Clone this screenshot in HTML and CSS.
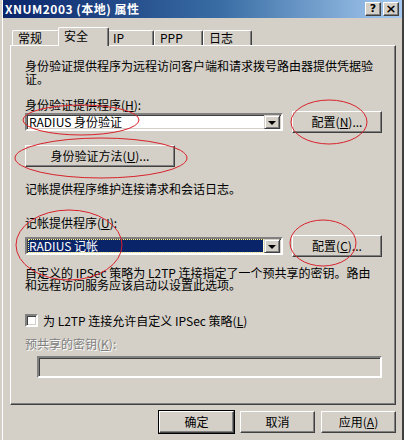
FILE: index.html
```html
<!DOCTYPE html>
<html lang="zh-CN">
<head>
<meta charset="UTF-8">
<title>XNUM2003 (本地) 属性</title>
<link rel="stylesheet" href="styles.css">
</head>
<body>

<div class="window">
    <div class="titlebar">
        <span class="title">XNUM2003 (本地) 属性</span>
        <div class="caption-btns">
            <span class="cbtn">?</span>
            <span class="cbtn close">×</span>
        </div>
    </div>

    <div class="client">
        <div class="tabs">
            <div class="tab w47">常规</div>
            <div class="tab active">安全</div>
            <div class="tab w46">IP</div>
            <div class="tab w48">PPP</div>
            <div class="tab w48">日志</div>
        </div>

        <div class="panel">
            <div class="intro">
                <div class="line">身份验证提供程序为远程访问客户端和请求拨号路由器提供凭据验</div>
                <div class="line">证。</div>
            </div>

            <div class="label first">身份验证提供程序(<u>H</u>):</div>
            <div class="row">
                <div class="combo">
                    <div class="combo-text">RADIUS 身份验证</div>
                    <div class="combo-arrow"><span class="tri"></span></div>
                </div>
                <button class="btn cfg">配置(<u>N</u>)...</button>
            </div>

            <button class="btn method">身份验证方法(<u>U</u>)...</button>

            <div class="label note">记帐提供程序维护连接请求和会话日志。</div>

            <div class="label second">记帐提供程序(<u>U</u>):</div>
            <div class="row tight">
                <div class="combo">
                    <div class="combo-text selected"><span class="focus">RADIUS 记帐</span></div>
                    <div class="combo-arrow"><span class="tri"></span></div>
                </div>
                <button class="btn cfg">配置(<u>C</u>)...</button>
            </div>

            <div class="para">
                <div class="line">自定义的 IPSec 策略为 L2TP 连接指定了一个预共享的密钥。路由</div>
                <div class="line">和远程访问服务应该启动以设置此选项。</div>
            </div>

            <label class="check">
                <span class="box"></span>
                <span class="check-text">为 L2TP 连接允许自定义 IPSec 策略(<u>L</u>)</span>
            </label>

            <div class="label disabled">预共享的密钥(<u>K</u>):</div>
            <div class="textbox"></div>
        </div>

        <div class="actions">
            <button class="btn act default">确定</button>
            <button class="btn act">取消</button>
            <button class="btn act">应用(<u>A</u>)</button>
        </div>
    </div>
</div>

<!-- red pen marks drawn over the screenshot -->
<svg class="marks" width="404" height="440" viewBox="0 0 404 440">
    <ellipse cx="81" cy="120" rx="58" ry="15"/>
    <ellipse cx="329" cy="122" rx="38" ry="22"/>
    <ellipse cx="101" cy="158" rx="86" ry="20"/>
    <ellipse cx="69" cy="245" rx="53" ry="35"/>
    <ellipse cx="323" cy="243" rx="33" ry="23"/>
</svg>

</body>
</html>
```

FILE: styles.css
```css
body {
    margin: 0;
    padding: 0;
    background-color: #d4d0c8;
    font-family: "Noto Sans CJK SC", "DejaVu Sans", sans-serif;
    font-size: 12px;
    color: #000;
    width: 404px;
    height: 440px;
    overflow: hidden;
    position: relative;
}
u {
    text-decoration: underline;
}
.window {
    margin-left: 2px;
    width: 399px;
    height: 440px;
    border-left: 1px solid #fff;
    border-right: 2px solid #404040;
}
.titlebar {
    height: 18px;
    display: flex;
    align-items: center;
    justify-content: space-between;
    background: linear-gradient(to right, #0a246a, #3a6ea5 55%, #a6caf0);
    padding-left: 2px;
    padding-right: 3px;
}
.title {
    color: #fff;
    font-weight: bold;
    font-size: 12px;
    line-height: 18px;
    letter-spacing: 0.5px;
}
.caption-btns {
    display: flex;
    gap: 2px;
}
.cbtn {
    width: 14px;
    height: 12px;
    background-color: #d4d0c8;
    border-top: 1px solid #fff;
    border-left: 1px solid #fff;
    border-right: 1px solid #404040;
    border-bottom: 1px solid #404040;
    box-shadow: inset -1px -1px 0 #808080;
    font-family: "DejaVu Sans", sans-serif;
    font-weight: bold;
    font-size: 11px;
    line-height: 12px;
    text-align: center;
}
.cbtn.close {
    font-size: 13px;
}
.client {
    padding: 9px 6px 0 7px;
}
.tabs {
    display: flex;
    align-items: flex-end;
    height: 18px;
    padding-left: 2px;
    position: relative;
    z-index: 1;
}
.tab {
    height: 14px;
    padding-left: 5px;
    line-height: 14px;
    border-top: 1px solid #fff;
    border-left: 1px solid #fff;
    border-right: 1px solid #404040;
    box-shadow: inset -1px 0 0 #808080;
    border-radius: 2px 2px 0 0;
    box-sizing: content-box;
    font-size: 12px;
}
.w46 { width: 40px; }
.w47 { width: 41px; }
.w48 { width: 42px; }
.tab.active {
    width: 44px;
    height: 18px;
    line-height: 16px;
    margin: 0 -2px -1px -2px;
    background-color: #d4d0c8;
    position: relative;
    z-index: 2;
}
.panel {
    height: 345px;
    border-top: 1px solid #fff;
    border-left: 1px solid #fff;
    border-right: 1px solid #404040;
    border-bottom: 1px solid #404040;
    box-shadow: inset -1px -1px 0 #808080;
    padding: 13px 10px 0 14px;
}
.line {
    height: 13px;
    line-height: 13px;
    white-space: nowrap;
}
.para {
    margin-top: 10px;
}
.para .line {
    height: 12px;
    line-height: 12px;
}
.label {
    line-height: 13px;
    white-space: nowrap;
}
.label.first { margin-top: 13px; }
.label.note { margin-top: 15px; }
.label.second { margin-top: 21px; }
.label.disabled {
    margin-top: 10px;
    color: #808080;
    text-shadow: 1px 1px 0 #fff;
}
.row {
    display: flex;
    align-items: center;
    gap: 9px;
    height: 22px;
}
.row.tight {
    margin-top: 6px;
}
.combo {
    width: 254px;
    height: 14px;
    display: flex;
    background-color: #fff;
    border-top: 2px solid #808080;
    border-left: 2px solid #808080;
    border-right: 2px solid #fff;
    border-bottom: 2px solid #fff;
    box-shadow: inset 1px 1px 0 #404040, inset -1px -1px 0 #d4d0c8;
    box-sizing: content-box;
}
.combo-text {
    flex: 1;
    margin: 1px;
    padding-left: 1px;
    height: 12px;
    line-height: 12px;
    white-space: nowrap;
}
.combo-text.selected {
    background-color: #0a246a;
    color: #fff;
}
.focus {
    display: block;
    outline: 1px dotted #ffff99;
    height: 12px;
}
.combo-arrow {
    width: 14px;
    height: 12px;
    margin-right: 1px;
    align-self: center;
    background-color: #d4d0c8;
    border-top: 1px solid #d4d0c8;
    border-left: 1px solid #d4d0c8;
    border-right: 1px solid #404040;
    border-bottom: 1px solid #404040;
    box-shadow: inset 1px 1px 0 #fff, inset -1px -1px 0 #808080;
    display: flex;
    align-items: center;
    justify-content: center;
    box-sizing: content-box;
}
.tri {
    width: 0;
    height: 0;
    border-left: 4px solid transparent;
    border-right: 4px solid transparent;
    border-top: 4px solid #000;
    margin-top: 1px;
}
.btn {
    font-family: inherit;
    font-size: 12px;
    color: #000;
    background-color: #d4d0c8;
    height: 22px;
    padding: 0;
    border-top: 1px solid #fff;
    border-left: 1px solid #fff;
    border-right: 1px solid #404040;
    border-bottom: 1px solid #404040;
    box-shadow: inset -1px -1px 0 #808080;
    border-radius: 0;
    text-align: center;
    white-space: nowrap;
    line-height: 18px;
    display: block;
}
.btn.cfg {
    width: 90px;
}
.btn.method {
    width: 150px;
    margin-top: 12px;
}
.actions {
    display: flex;
    justify-content: flex-end;
    gap: 6px;
    margin-top: 6px;
}
.btn.act {
    width: 75px;
    height: 22px;
}
.btn.default {
    outline: 1px solid #000;
}
.check {
    display: flex;
    align-items: center;
    gap: 5px;
    margin-top: 23px;
    line-height: 13px;
    white-space: nowrap;
}
.box {
    width: 9px;
    height: 9px;
    background-color: #fff;
    border-top: 2px solid #808080;
    border-left: 2px solid #808080;
    border-right: 2px solid #fff;
    border-bottom: 2px solid #fff;
    box-shadow: inset 1px 1px 0 #404040, inset -1px -1px 0 #d4d0c8;
}
.textbox {
    margin: 6px 0 0 12px;
    width: 341px;
    height: 18px;
    background-color: #d4d0c8;
    border-top: 2px solid #808080;
    border-left: 2px solid #808080;
    border-right: 2px solid #fff;
    border-bottom: 2px solid #fff;
    box-shadow: inset 1px 1px 0 #404040, inset -1px -1px 0 #d4d0c8;
}
.marks {
    position: absolute;
    left: 0;
    top: 0;
    pointer-events: none;
}
.marks ellipse {
    fill: none;
    stroke: #d8222a;
    stroke-width: 1;
}
```
